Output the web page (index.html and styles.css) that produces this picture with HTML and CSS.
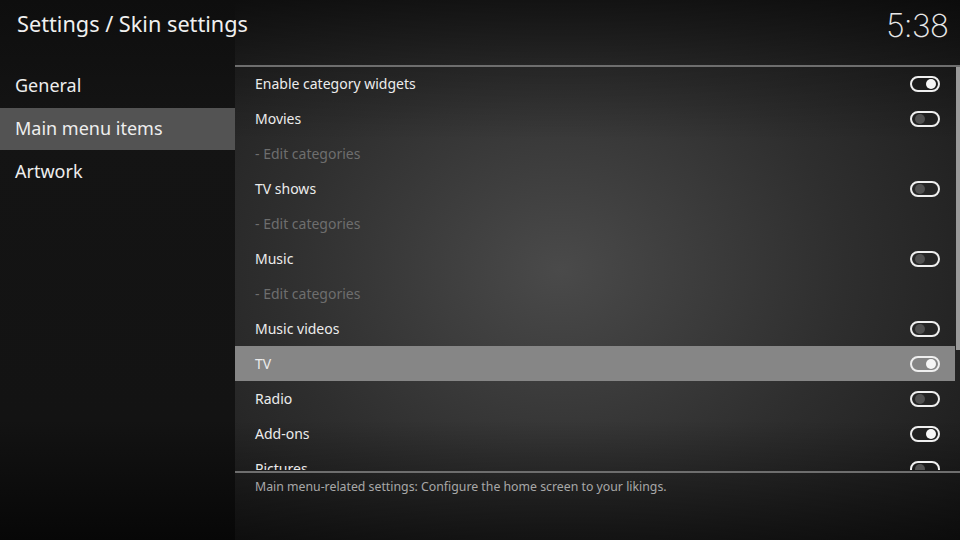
FILE: index.html
```html
<!DOCTYPE html>
<html>
<head>
<meta charset="utf-8">
<link rel="stylesheet" href="styles.css">
</head>
<body>
<div class="screen">
  <header class="topbar">
    <h1 class="title">Settings / Skin settings</h1>
    <div class="clock">5:38</div>
  </header>
  <nav class="side">
    <div class="side-item">General</div>
    <div class="side-item active">Main menu items</div>
    <div class="side-item">Artwork</div>
  </nav>
  <main class="content">
    <div class="list-wrap">
      <ul class="list">
        <li class="row"><span>Enable category widgets</span><span class="toggle on"></span></li>
        <li class="row"><span>Movies</span><span class="toggle"></span></li>
        <li class="row disabled"><span>- Edit categories</span></li>
        <li class="row"><span>TV shows</span><span class="toggle"></span></li>
        <li class="row disabled"><span>- Edit categories</span></li>
        <li class="row"><span>Music</span><span class="toggle"></span></li>
        <li class="row disabled"><span>- Edit categories</span></li>
        <li class="row"><span>Music videos</span><span class="toggle"></span></li>
        <li class="row focused"><span>TV</span><span class="toggle on"></span></li>
        <li class="row"><span>Radio</span><span class="toggle"></span></li>
        <li class="row"><span>Add-ons</span><span class="toggle on"></span></li>
        <li class="row"><span>Pictures</span><span class="toggle"></span></li>
      </ul>
      <div class="scrollbar"></div>
    </div>
    <p class="desc">Main menu-related settings: Configure the home screen to your likings.</p>
  </main>
</div>
</body>
</html>
```
FILE: styles.css
```css
* { box-sizing: border-box; margin: 0; padding: 0; }
html, body { width: 960px; height: 540px; overflow: hidden; }
body {
  font-family: "Noto Sans", "Open Sans", sans-serif;
  color: #ececec;
  background:
    linear-gradient(to bottom, rgba(0,0,0,0.55) 0, rgba(0,0,0,0.25) 65px, rgba(0,0,0,0) 140px, rgba(0,0,0,0) 420px, rgba(0,0,0,0.55) 540px),
    radial-gradient(ellipse 520px 420px at 560px 270px, #4a4a4a 0%, #2e2e2e 55%, #1a1a1a 100%);
}
.screen {
  width: 960px; height: 540px;
  display: grid;
  grid-template-columns: 235px 1fr;
  grid-template-rows: 65px 1fr;
}
.topbar {
  grid-column: 1 / 3;
  grid-row: 1;
  display: flex;
  justify-content: space-between;
  align-items: flex-start;
  padding: 0 12px 0 17px;
  position: relative;
  z-index: 1;
}
.title {
  font-weight: 400;
  font-size: 21.7px;
  line-height: 1;
  padding-top: 13px;
  color: #f0f0f0;
  white-space: nowrap;
}
.clock {
  font-family: "Inter", sans-serif;
  font-weight: 200;
  font-size: 32px;
  line-height: 1;
  padding-top: 10px;
  color: #e8e8e8;
  letter-spacing: -1px;
}
.side {
  grid-column: 1;
  grid-row: 1 / 3;
  padding-top: 65px;
  background: linear-gradient(to bottom, #0e0e0e 0, #141414 120px, #131313 420px, #070707 540px);
}
.side-item {
  height: 42px;
  line-height: 42px;
  font-size: 18px;
  padding-left: 15px;
  color: #eeeeee;
}
.side-item:first-child { height: 43px; line-height: 41px; }
.side-item.active { background: #535353; line-height: 40px; }
.content {
  grid-column: 2;
  grid-row: 2;
  display: flex;
  flex-direction: column;
}
.list-wrap {
  height: 408px;
  border-top: 2px solid #6e6e6e;
  border-bottom: 2px solid #6e6e6e;
  display: flex;
  overflow: hidden;
}
.list {
  list-style: none;
  flex: 1;
  height: 404px;
  overflow: hidden;
  margin-top: -1px;
}
.row {
  height: 35px;
  display: flex;
  align-items: center;
  justify-content: space-between;
  padding: 0 15px 0 20px;
  font-size: 14px;
  color: #ececec;
}
.row span:first-child { margin-top: -1px; }
.row.disabled { color: #6e6e6e; }
.row.focused { background: #868686; }
.toggle {
  width: 30px;
  height: 16px;
  border: 2px solid #efefef;
  border-radius: 8px;
  position: relative;
  flex: none;
}
.toggle::after {
  content: "";
  position: absolute;
  top: 1px;
  left: 3px;
  width: 10px;
  height: 10px;
  border-radius: 50%;
  background: #505050;
}
.toggle.on::after { left: auto; right: 2px; background: #f6f6f6; }
.scrollbar {
  width: 4px;
  height: 283px;
  background: #9a9a9a;
  margin-left: 1px;
  flex: none;
}
.desc {
  padding: 5px 0 0 20px;
  font-size: 12.3px;
  color: #a8a8a8;
}
```
